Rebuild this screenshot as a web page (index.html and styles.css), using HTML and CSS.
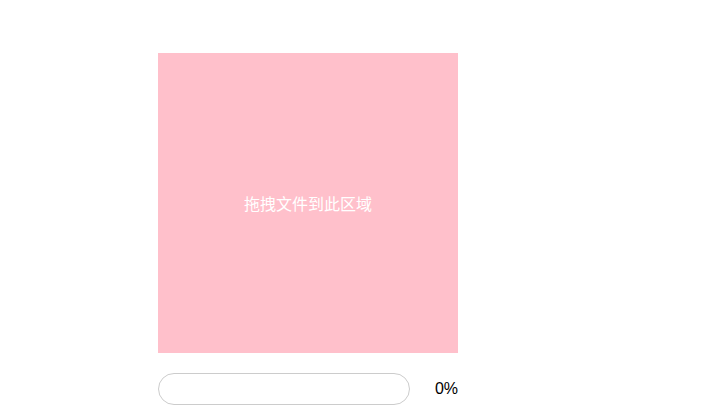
FILE: index.html
```html
<!DOCTYPE html>
<html lang="zh">
<head>
<meta charset="utf-8">
<link rel="stylesheet" href="styles.css">
</head>
<body>
<div class="wrap">
  <div class="drop">拖拽文件到此区域</div>
  <div class="row">
    <div class="bar"><div class="fill" style="width:0%"></div></div>
    <span class="pct">0%</span>
  </div>
</div>
</body>
</html>
```
FILE: styles.css
```css
body {
  margin: 8px;
  font-family: "Liberation Sans", "Noto Sans CJK SC", sans-serif;
  font-size: 16px;
  background: #fff;
}
.wrap {
  margin: 45px 0 0 150px;
  width: 300px;
}
.drop {
  width: 300px;
  height: 300px;
  background: #ffc0cb;
  color: #fff;
  display: flex;
  align-items: center;
  justify-content: center;
}
.row {
  margin-top: 20px;
  display: flex;
  align-items: center;
  justify-content: space-between;
}
.bar {
  width: 250px;
  height: 30px;
  border: 1px solid #ccc;
  border-radius: 16px;
  overflow: hidden;
}
.fill {
  height: 100%;
  background: #ffc0cb;
}
.pct {
  color: #000;
}
```
